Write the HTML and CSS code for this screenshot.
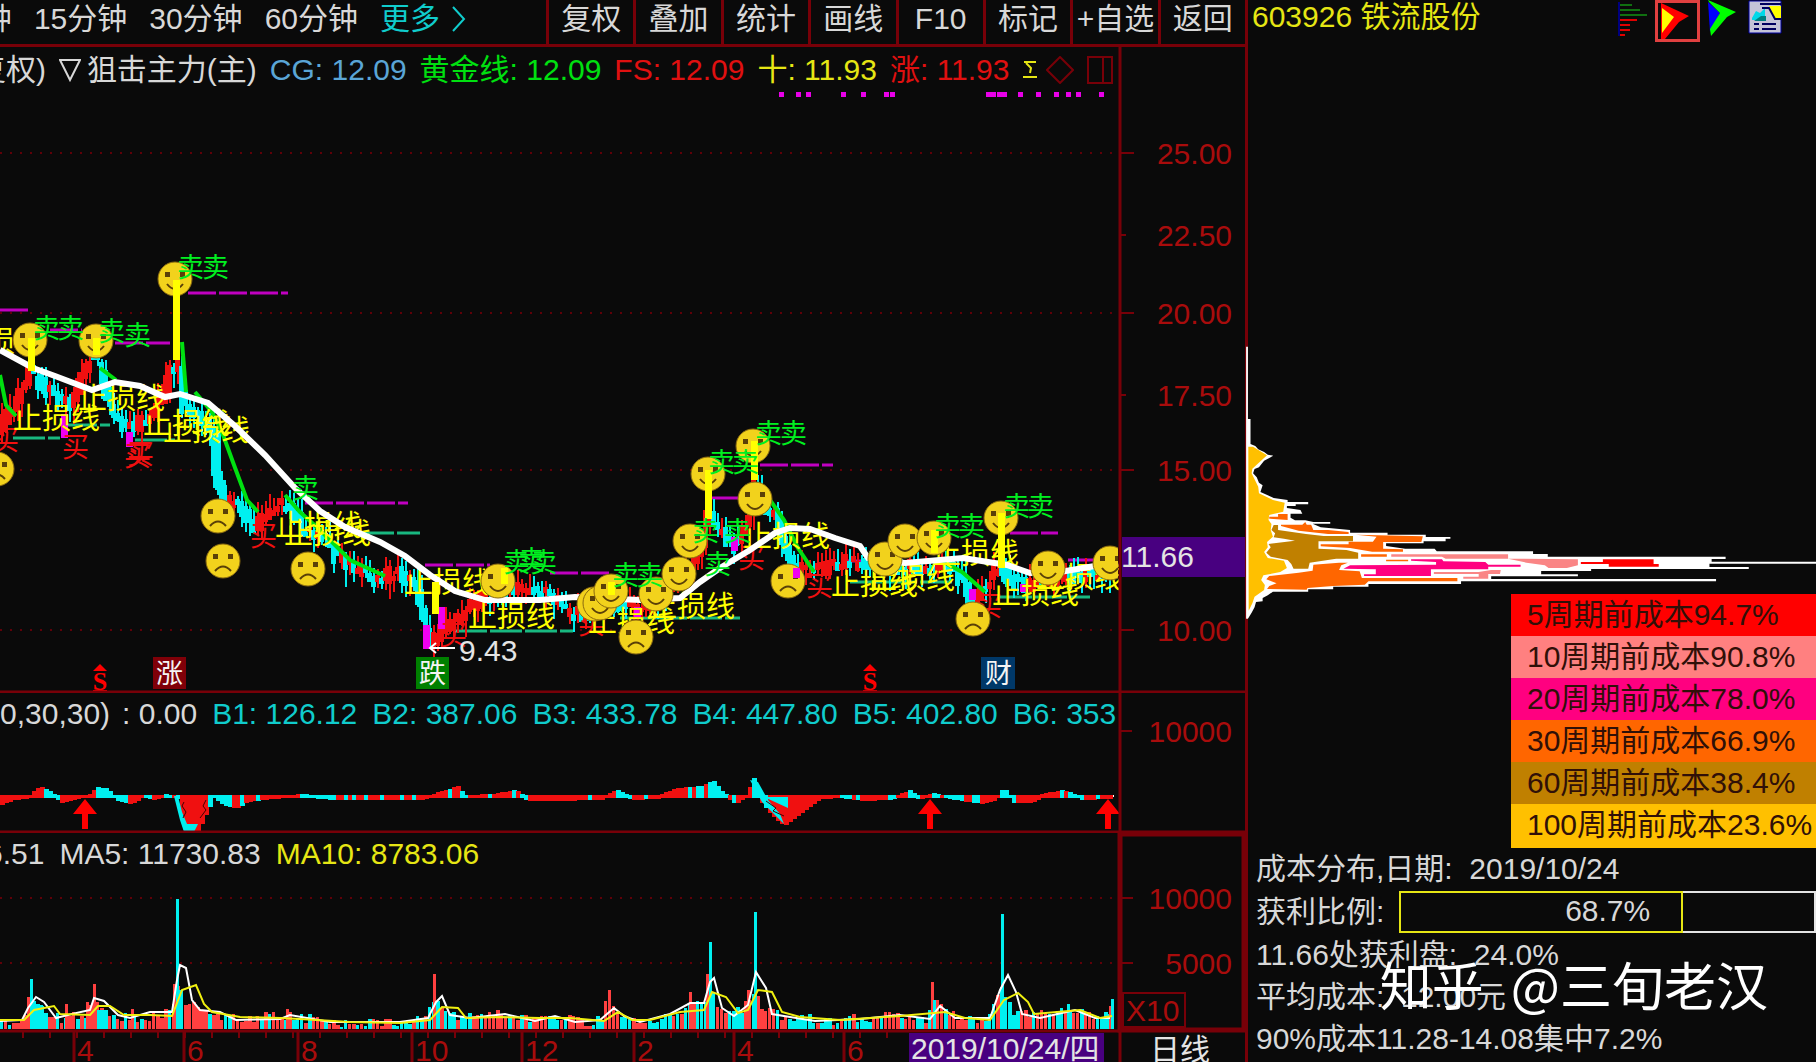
FILE: index.html
```html
<!DOCTYPE html>
<html lang="zh-CN">

<head>
    <meta charset="utf-8">
    <meta name="viewport" content="width=device-width, initial-scale=1">
    <title>铁流股份 603926</title>
    <link rel="stylesheet" href="styles.css">
</head>

<body>
    <div class="app">
        <main class="main">
            <div class="toolbar">
                <nav class="periods">
                    <a href="#">5分钟</a>
                    <a href="#">15分钟</a>
                    <a href="#">30分钟</a>
                    <a href="#">60分钟</a>
                    <a href="#" class="more">更多
                        <svg width="14" height="26" viewBox="0 0 14 26"><path d="M1 1L12 13L1 25" /></svg>
                    </a>
                </nav>
                <div class="tools">
                    <button type="button">复权</button>
                    <button type="button">叠加</button>
                    <button type="button">统计</button>
                    <button type="button">画线</button>
                    <button type="button">F10</button>
                    <button type="button">标记</button>
                    <button type="button">+自选</button>
                    <button type="button">返回</button>
                </div>
            </div>

            <section class="pane">
                <svg id="price" class="chart" viewBox="0 47 1245 646"></svg>
                <div class="info info-end">
                    <span>(前复权)</span>
                    <span class="name"><svg width="22" height="24" viewBox="0 0 22 24"><path d="M1 2H21L11 22Z" /></svg>狙击主力(主)</span>
                    <span class="blue">CG: 12.09</span>
                    <span class="green">黄金线: 12.09</span>
                    <span class="red">FS: 12.09</span>
                    <span class="yellow">十: 11.93</span>
                    <span class="red">涨: 11.93</span>
                    <svg class="sigma" width="14" height="20" viewBox="0 0 14 20"><path d="M1 2H13M3 3L8 8L7 13M0 17H14" /></svg>
                    <svg class="dim" width="28" height="28" viewBox="0 0 28 28"><path d="M14 1L27 14L14 27L1 14Z" /></svg>
                    <svg class="dim" width="26" height="28" viewBox="0 0 26 28"><path d="M1 1H25V27H1ZM16 1V27" /></svg>
                </div>
            </section>

            <section class="pane">
                <svg id="wave" class="chart" viewBox="0 693 1245 140"></svg>
                <div class="info info-wave">
                    <span>0,30,30)</span>
                    <span>: 0.00</span>
                    <span class="cyan">B1: 126.12</span>
                    <span class="cyan">B2: 387.06</span>
                    <span class="cyan">B3: 433.78</span>
                    <span class="cyan">B4: 447.80</span>
                    <span class="cyan">B5: 402.80</span>
                    <span class="cyan">B6: 353</span>
                </div>
            </section>

            <section class="pane">
                <svg id="volume" class="chart" viewBox="0 833 1245 229"></svg>
                <div class="info info-volume">
                    <span>6.51</span>
                    <span>MA5: 11730.83</span>
                    <span class="yellow">MA10: 8783.06</span>
                </div>
            </section>
        </main>

        <aside class="side">
            <header class="side-head">
                <h1>603926 铁流股份</h1>
                <div class="side-icons">
                    <button type="button" aria-label="分价">
                        <svg width="30" height="38" viewBox="0 0 30 38" fill="none" stroke-width="2">
                            <path stroke="#107010" d="M2 5H14M2 10H22M2 15H29" />
                            <path stroke="#e00000" d="M2 20H19M2 25H12M2 30H12M2 35H7" />
                            <path stroke="#000080" d="M1 2V36" />
                        </svg>
                    </button>
                    <button type="button" class="on" aria-label="筹码">
                        <svg width="28" height="36" viewBox="0 0 28 36">
                            <path fill="#f00" d="M0 0L28 13L18 19L4 36L0 36Z" />
                            <path fill="#ff0" d="M1 5L13 14L1 30Z" />
                        </svg>
                    </button>
                    <button type="button" aria-label="火焰山">
                        <svg width="30" height="36" viewBox="0 0 30 36">
                            <path fill="#00f" d="M1 2L13 13L3 32Z" />
                            <path fill="#0f0" d="M1 0L29 12L20 17L4 36L3 29L13 13L2 2Z" />
                        </svg>
                    </button>
                    <button type="button" aria-label="资料">
                        <svg width="34" height="34" viewBox="0 0 34 34">
                            <path fill="#c4c4d8" stroke="#0000a0" d="M1 1H33V33H1Z" />
                            <path fill="#00d8e8" d="M4 18L8 11L12 13L17 8V20H4Z" />
                            <path fill="#008080" d="M13 16H18V21H6Z" />
                            <path fill="#ff0" d="M21 6H33V18H27L22 12Z" />
                            <path fill="none" stroke="#000060" stroke-width="2" d="M12 4H33M14 8H21L27 19H33M6 24H11M14 24H28M6 29H11M14 29H28" />
                        </svg>
                    </button>
                </div>
            </header>

            <svg class="dist" viewBox="14 0 1554 762" preserveAspectRatio="none">
                <path fill="#fff" d="M17 20H22V237H29V312L42 318L50 328L66 336L76 344L91 347L80 354L66 362L52 382L40 387L36 400L46 412L52 428L62 436L56 456L76 466L92 474L130 480V486H186V493H152V498H128V504L165 510L170 521H138V533L150 541H178L200 546H246V551H198L220 562L300 570V578H402V584H506V591H573V596H560V604H500V610H398V618L450 626H530L536 634H798V642H838V650H1322V657H1284V665H1568V671H1278V681H1385V687H956V693H820V703H920V709H684V717H1296V724H602V732H350V740H254V748H186V755H90L76 766L62 774V784L44 786L40 802L32 818L22 836H17Z" />
                <path fill="#ffc000" d="M23 320H36L74 346L34 386L32 400L50 440L52 460L90 480L122 488L118 515L80 525L78 540L86 552L84 570L90 590L74 606L76 622L66 636L76 654L120 662L128 684L110 696L64 706L58 720L68 735L66 750L40 770L34 790L24 812Z" />
                <path fill="#c08000" d="M92 555H104V570L180 582L228 588H308V604H214V626L290 630L322 638V656H262L190 668L186 686H146L140 672L130 660L84 650L72 638L84 622L78 612L150 602L120 596L92 592L96 580L86 570Z" />
                <path fill="#ff6600" d="M104 522H130V540L80 536V530H104ZM112 554H170L178 546L182 554H194L200 570H240L296 576V582H240L160 572L112 558ZM316 584L498 589L494 606H390V626L444 628V635H360L300 624L220 619V613H296V605H362L372 590ZM330 643H400V650H330ZM398 659H458V664H398ZM200 674L270 668H294L276 676L270 690L326 694L332 714H592V724H350L340 734L254 738L184 744L182 749L74 747L80 738L100 730L72 718L80 708L160 698L198 692Z" />
                <path fill="#fa8585" d="M412 643H730V656H770L920 658V676L890 684H840L830 676L780 668L730 656H560L550 650H412ZM528 696H650L684 690H710L708 702H676V716H608V710H650V702H528Z" />
                <path fill="#ff0080" d="M466 658H550L554 664L668 666L676 674H764V680H676V688H520V708H338V703H370V688L282 686L300 676L534 674V666L466 662Z" />
                <path fill="#f00" d="M988 658H1126V672H1140V680H1004V672H928V666H988Z" />
            </svg>

            <ul class="legend">
                <li class="c5">5周期前成本94.7%</li>
                <li class="c10">10周期前成本90.8%</li>
                <li class="c20">20周期前成本78.0%</li>
                <li class="c30">30周期前成本66.9%</li>
                <li class="c60">60周期前成本38.4%</li>
                <li class="c100">100周期前成本23.6%</li>
            </ul>

            <div class="stats">
                <p>成本分布,日期: &nbsp;2019/10/24</p>
                <div class="ratio">
                    <span>获利比例:</span>
                    <div class="ratio-bar">
                        <div class="ratio-fill" style="width: 68.7%"></div>
                        <span class="ratio-text">68.7%</span>
                    </div>
                </div>
                <p>11.66处获利盘: &nbsp;24.0%</p>
                <p>平均成本: &nbsp;12.00元</p>
                <p>90%成本11.28-14.08集中7.2%</p>
            </div>

            <div class="watermark"><span>知乎</span><span>@三旬老汉</span></div>
        </aside>
    </div>
    <script src="chart.js"></script>
</body>

</html>
```

FILE: styles.css
```css
* {
    box-sizing: border-box;
}

body {
    margin: 0;
    background-color: #0a0a0a;
    color: #d8d8d8;
    font-family: "Liberation Sans", "Noto Sans CJK SC", sans-serif;
    font-size: 30px;
    line-height: 42px;
    overflow: hidden;
}

a {
    color: inherit;
    text-decoration: none;
}

button {
    padding: 0;
    border: none;
    background: none;
    color: inherit;
    font: inherit;
    cursor: pointer;
}

.app {
    display: grid;
    grid-template-columns: minmax(0, 1245fr) minmax(0, 571fr);
    min-height: 100vh;
}

/* toolbar */
.toolbar {
    display: grid;
    grid-template-columns: minmax(0, 546fr) minmax(0, 699fr);
    height: 47px;
    border-bottom: 3px solid #780008;
    line-height: 38px;
    white-space: nowrap;
}

.periods {
    display: flex;
    justify-content: flex-end;
    gap: 22px;
    padding-right: 80px;
    overflow: hidden;
}

.more {
    display: flex;
    align-items: center;
    gap: 12px;
    height: 38px;
    color: #10cccc;
}

.more svg {
    fill: none;
    stroke: #10cccc;
    stroke-width: 2;
}

.tools {
    display: grid;
    grid-template-columns: repeat(8, minmax(0, 1fr));
}

.tools button {
    padding-bottom: 6px;
    border-left: 3px solid #780008;
}

/* chart panes */
.pane {
    position: relative;
}

.chart {
    display: block;
    width: 100%;
}

.info {
    position: absolute;
    top: 0;
    left: 0;
    width: 90%;
    display: flex;
    gap: 15px;
    overflow: hidden;
    white-space: nowrap;
}

.info-end {
    align-items: center;
    justify-content: flex-end;
    gap: 13px;
    padding: 2px 8px 0 0;
}

.info-wave span:nth-child(2) {
    margin-left: -3px;
}

.info-volume span:first-child {
    margin-left: -14px;
}

.info span,
.info svg {
    flex: none;
}

.info svg {
    fill: none;
    stroke: #d8d8d8;
    stroke-width: 2;
}

.name {
    display: flex;
    align-items: center;
    gap: 6px;
}

.info .sigma {
    margin-right: -4px;
    stroke: #e6e614;
}

.info .dim {
    stroke: #780008;
}

.blue {
    color: #5aa5d6;
}

.green {
    color: #00e010;
}

.red {
    color: #e01010;
}

.yellow {
    color: #e6e614;
}

.cyan {
    color: #10cccc;
}

.chart .frame {
    fill: none;
    stroke: #780008;
    stroke-width: 3;
}

.chart .heavy {
    stroke-width: 5;
}

.chart .thin {
    stroke-width: 2;
}

.chart .grid {
    stroke: #600008;
    stroke-width: 2;
    stroke-dasharray: 2 8;
}

.chart .axis {
    fill: #a80c0c;
}

.chart .end {
    text-anchor: end;
}

.chart .mid {
    text-anchor: middle;
}

.chart .cursor {
    fill: #480080;
}

.chart .light {
    fill: #e4e4e4;
}

.chart .sell {
    fill: #00f020;
    font-size: 27px;
}

.chart .buy {
    fill: #f01010;
    font-size: 27px;
}

.chart .stop {
    fill: #ffff00;
    font-size: 29px;
}

.chart .badge {
    fill: #f4f4f4;
    font-size: 27px;
}

.chart .mark {
    fill: #ff0000;
    font-family: "Liberation Serif", serif;
    font-size: 26px;
    font-weight: bold;
}

/* right panel */
.side {
    position: relative;
    display: flex;
    flex-direction: column;
    border-left: 3px solid #780008;
}

.side-head {
    display: flex;
    align-items: flex-start;
    justify-content: space-between;
    height: 340px;
    padding: 0 34px 0 4px;
    color: #e6e614;
}

.side-head h1 {
    margin: 0;
    font-size: 30px;
    font-weight: normal;
    line-height: 34px;
}

.side-icons {
    display: flex;
    align-items: flex-start;
    gap: 7px;
}

.side-icons svg {
    display: block;
}

.side-icons button:last-child {
    margin-left: 4px;
}

.side-icons .on {
    padding: 0 8px 0 3px;
    border: 3px solid #e04040;
}

.dist {
    display: block;
    width: calc(100% + 3px);
    height: 254px;
    margin-left: -3px;
    overflow: visible;
    flex: none;
}

.legend {
    align-self: flex-end;
    width: 305px;
    margin: 0;
    padding: 0;
    list-style: none;
    color: #301008;
    white-space: nowrap;
}

.legend li {
    height: 42px;
    padding-left: 16px;
}

.legend .c5 {
    background-color: #ff0000;
}

.legend .c10 {
    background-color: #ff8080;
}

.legend .c20 {
    background-color: #ff0080;
}

.legend .c30 {
    background-color: #ff6600;
}

.legend .c60 {
    background-color: #c08000;
}

.legend .c100 {
    height: 44px;
    background-color: #ffc000;
}

.stats {
    padding-left: 8px;
    white-space: nowrap;
}

.stats p {
    height: 42px;
    margin: 0;
}

.ratio {
    display: flex;
    align-items: center;
    gap: 15px;
    height: 44px;
}

.ratio-bar {
    position: relative;
    flex: 1;
    height: 42px;
    border: 2px solid #e4e4e4;
    line-height: 36px;
    text-align: center;
}

.ratio-fill {
    position: absolute;
    top: -2px;
    left: -2px;
    height: 42px;
    border: 2px solid #e6e614;
}

.watermark {
    position: absolute;
    right: 48px;
    bottom: 40px;
    display: flex;
    gap: 27px;
    color: #ffffff;
    font-family: "Noto Sans CJK SC", sans-serif;
    font-size: 52px;
    line-height: 76px;
    white-space: nowrap;
}
```

FILE: chart.js
```js
var RED = "#f01010";
var CYAN = "#00f0f0";

// fixed seed so that the bars are the same on every load
var seed = 603926;
function rnd() {
    seed = (seed * 16807) % 2147483647;
    return seed / 2147483647;
}

function line(x1, y1, x2, y2, cls) {
    return '<path class="' + cls + '" d="M' + x1 + ' ' + y1 + 'L' + x2 + ' ' + y2 + '"/>';
}

function stroke(points, color, width, dash) {
    return '<polyline fill="none" stroke="' + color + '" stroke-width="' + width + '"' +
        (dash ? ' stroke-dasharray="' + dash + '"' : '') + ' points="' + points + '"/>';
}

function rect(x, y, w, h, color) {
    return '<rect x="' + x + '" y="' + y + '" width="' + w + '" height="' + h + '" fill="' + color + '"/>';
}

function text(x, y, cls, str) {
    return '<text x="' + x + '" y="' + y + '" class="' + cls + '">' + str + '</text>';
}

// value of a list of [x, y] points at x
function at(points, x) {
    for (var i = 1; i < points.length; i++) {
        if (x <= points[i][0]) {
            var a = points[i - 1], b = points[i];
            return a[1] + (b[1] - a[1]) * (x - a[0]) / (b[0] - a[0]);
        }
    }
    return points[points.length - 1][1];
}

function face(x, y, sad) {
    var mouth = sad ? 'M-8 10Q0 1 8 10' : 'M-8 5Q0 15 8 5';
    return '<g transform="translate(' + x + ' ' + y + ')">' +
        '<circle r="17" fill="#f2d21c" stroke="#8a6a10" stroke-width="1"/>' +
        '<path fill="#5a4008" d="M-10 -7h5v5h-5zM5 -7h5v5h-5z"/>' +
        '<path fill="none" stroke="#5a4008" stroke-width="2" d="' + mouth + '"/></g>';
}

function drawPrice() {
    var s = '';
    [153, 313, 470, 630].forEach(function (y) {
        s += line(0, y, 1118, y, 'grid');
    });

    var dots = [781, 798, 808, 843, 863, 886, 892, 988, 993, 999, 1004, 1020, 1038, 1056, 1068, 1078, 1101];
    dots.forEach(function (x) {
        s += rect(x - 2, 92, 5, 5, '#e800e8');
    });

    // resistance and support segments
    [[0, 28, 310], [50, 82, 330], [115, 170, 343], [188, 288, 293], [305, 408, 503], [425, 490, 565],
    [550, 612, 573], [712, 742, 498], [760, 833, 465], [845, 872, 561], [1010, 1058, 533], [1068, 1096, 560]].forEach(function (l) {
        s += stroke(l[0] + ',' + l[2] + ' ' + l[1] + ',' + l[2], '#c000c0', 3, '28 3');
    });
    [[13, 60, 438], [65, 110, 425], [135, 175, 440], [362, 420, 533], [455, 573, 631], [620, 740, 618], [850, 960, 582], [1000, 1090, 597]].forEach(function (l) {
        s += stroke(l[0] + ',' + l[2] + ' ' + l[1] + ',' + l[2], '#18b880', 3, '32 3');
    });

    var price = [[0, 425], [15, 405], [30, 368], [45, 385], [60, 395], [75, 400], [90, 355], [100, 360], [108, 400], [120, 420],
    [135, 425], [150, 415], [165, 395], [172, 362], [180, 365], [184, 405], [200, 412], [212, 425], [217, 480], [224, 505],
    [235, 500], [247, 512], [254, 530], [268, 510], [290, 500], [305, 530], [322, 532], [335, 552], [360, 570], [380, 578], [400, 568],
    [416, 585], [423, 610], [428, 640], [440, 632], [455, 618], [475, 602], [495, 590], [520, 588], [545, 588],
    [570, 610], [585, 612], [610, 602], [640, 605], [660, 598], [680, 580], [700, 550], [708, 510], [718, 528], [735, 545],
    [748, 520], [754, 480], [765, 505], [775, 512], [785, 545], [795, 570], [820, 568], [850, 560], [870, 565], [910, 565], [950, 566],
    [965, 580], [973, 602], [985, 585], [1000, 565], [1010, 575], [1030, 582], [1060, 575], [1118, 568]];
    for (var x = 1; x < 1116; x += 4) {
        var y0 = at(price, x - 3) + rnd() * 10 - 5;
        var y1 = at(price, x + 3) + rnd() * 14 - 7;
        var color = y1 > y0 ? CYAN : RED;
        var top = Math.round(Math.min(y0, y1)), h = Math.round(Math.abs(y1 - y0)) + 5;
        s += rect(x - 2, top, 5, h, color);
        s += rect(x, Math.round(top - 3 - rnd() * 11), 2, Math.round(h + 8 + rnd() * 14), color);
    }
    s += rect(213, 430, 8, 58, CYAN) + rect(219, 480, 7, 20, CYAN);
    [[61, 414, 24], [126, 432, 15], [423, 625, 24], [438, 607, 22], [731, 537, 14], [634, 607, 10], [969, 589, 11], [1020, 584, 8]].forEach(function (b) {
        s += rect(b[0], b[1], 7, b[2], '#f000f0');
    });

    ['0,375 6,405 16,416', '100,368 116,380', '182,342 186,392', '195,392 212,412 222,432 234,465 247,500 258,512',
        '285,495 300,512 320,530 350,560 385,576', '770,500 784,520 798,548 814,572', '940,560 962,572 985,592'].forEach(function (p) {
        s += stroke(p, '#00e010', 4);
    });

    [[-8, 450], [62, 457], [124, 466], [127, 464], [250, 546], [578, 634], [738, 568], [806, 596], [975, 616], [440, 645]].forEach(function (p) {
        s += text(p[0], p[1], 'buy', '买');
    });
    [[13, 429], [78, 409], [143, 434], [163, 441], [275, 536], [284, 544], [404, 593], [468, 627], [588, 632],
    [648, 617], [743, 547], [831, 595], [868, 589], [932, 564], [992, 604], [1036, 588]].forEach(function (p) {
        s += text(p[0], p[1], 'stop', '止损线');
    });
    s += text(-14, 352, 'stop', '损');

    s += stroke('0,350 33,368 55,376 92,390 115,382 140,386 165,397 180,394 208,403 235,426 265,455 295,488 320,511 345,527 380,542 ' +
        '405,556 430,575 455,591 485,600 540,600 575,597 640,600 680,598 700,582 720,568 750,550 775,533 790,528 810,529 835,538 860,546 868,558 905,563 ' +
        '963,558 1007,565 1030,573 1060,572 1118,562', '#fff', 6);

    var faces = [[-3, 469, 1], [30, 340, 0], [96, 341, 0], [175, 279, 0], [218, 516, 1], [223, 561, 1], [308, 569, 1],
    [498, 581, 0], [594, 604, 0], [600, 603, 0], [611, 591, 0], [656, 594, 0], [679, 574, 0], [690, 541, 0], [708, 474, 0],
    [753, 446, 0], [755, 499, 0], [788, 581, 1], [885, 559, 0], [905, 541, 0], [934, 538, 0], [1001, 518, 0], [1048, 568, 0],
    [636, 637, 1], [973, 619, 1]];
    faces.forEach(function (f) {
        s += face(f[0], f[1], f[2]);
    });
    // the last one is cut by the axis
    s += '<svg x="1080" y="540" width="38" height="50">' + face(30, 23, 0) + '</svg>';

    [[28, 338, 33], [93, 338, 17], [173, 280, 80], [501, 568, 16], [608, 582, 13], [705, 470, 49], [751, 441, 39], [931, 530, 23], [998, 513, 55], [432, 582, 32]].forEach(function (b) {
        s += rect(b[0], b[1], 7, b[2], '#ffff00');
    });
    s += rect(793, 568, 7, 10, '#f000f0');

    [[33, 338], [57, 338], [98, 341], [124, 345], [177, 277], [202, 277], [292, 498], [503, 572], [518, 570], [530, 572],
    [612, 585], [636, 585], [708, 472], [732, 472], [692, 541], [724, 541], [704, 574], [755, 443], [780, 443],
    [934, 536], [958, 536], [1003, 516], [1027, 516]].forEach(function (p) {
        s += text(p[0], p[1], 'sell', '卖');
    });

    s += stroke('430,648 455,648', '#fff', 2) + stroke('436,643 430,648 436,653', '#fff', 2);
    s += text(459, 661, 'light', '9.43');

    s += rect(153, 657, 33, 32, '#800008') + text(156, 683, 'badge', '涨');
    s += rect(416, 657, 33, 32, '#008000') + text(419, 683, 'badge', '跌');
    s += rect(981, 657, 34, 32, '#003868') + text(985, 683, 'badge', '财');
    [100, 870].forEach(function (x) {
        s += '<path fill="#f00" d="M' + x + ' 664l7 7h-14z"/>' + text(x, 690, 'mark mid', 'S') + rect(x - 7, 690, 14, 2, '#f00');
    });

    // axis
    s += rect(1121, 500, 124, 110, '#0a0a0a');
    s += line(1120, 47, 1120, 693, 'frame');
    [[25, 153], [22.5, 235], [20, 313], [17.5, 395], [15, 470], [10, 630]].forEach(function (t) {
        s += line(1120, t[1], t[0] % 5 ? 1126 : 1134, t[1], 'frame thin');
        s += text(1232, t[1] + 11, 'axis end', t[0].toFixed(2));
    });
    s += '<rect class="cursor" x="1122" y="537" width="123" height="40"/>';
    s += text(1121, 567, 'light', '11.66');
    s += line(0, 692, 1245, 692, 'frame');
    document.getElementById("price").innerHTML = s;
}

function drawWave() {
    var s = stroke('0,796 1114,796', '#fff', 2);
    var wave = [[0, 802], [12, 797], [28, 795], [38, 786], [50, 792], [60, 800], [75, 796], [88, 794], [95, 787], [105, 788], [115, 798],
    [130, 801], [142, 794], [152, 797], [165, 794], [176, 796], [182, 820], [188, 831], [196, 830], [204, 812], [212, 795],
    [222, 802], [234, 806], [246, 799], [270, 796], [300, 794], [330, 797], [420, 797], [434, 793], [456, 786], [464, 795], [490, 794],
    [515, 790], [525, 798], [545, 798], [600, 797], [615, 790], [630, 797], [655, 796], [675, 788], [700, 786], [711, 780], [722, 793],
    [734, 801], [744, 795], [752, 778], [760, 800], [770, 812], [782, 823], [794, 814], [806, 805], [818, 796], [840, 795], [860, 798],
    [890, 797], [908, 790], [918, 797], [930, 793], [960, 798], [980, 801], [994, 797], [1002, 787], [1012, 800], [1030, 800], [1042, 793],
    [1062, 790], [1080, 797], [1110, 796]];
    for (var x = 0; x < 1112; x += 4) {
        var y = Math.round(at(wave, x));
        var up = at(wave, x + 5) <= at(wave, x - 1);
        var color = rnd() < 0.12 ? !up : up;
        if (y > 806) color = true;
        s += rect(x, Math.min(y, 795), 5, Math.abs(y - 795) + 3, color ? RED : CYAN);
    }
    s += '<path fill="#00f0f0" d="M174 796L180 820L184 832H194L198 824H187L182 812L178 796ZM750 780L762 802L784 824L780 814L768 800L758 782ZM764 797H788V808Z"/>';
    s += stroke('184,802 182,806 186,812 183,818', '#400', 1) + stroke('206,800 203,806 206,810 200,818', '#400', 1);
    s += stroke('766,801 776,808 773,811 784,816', '#400', 1);
    [85, 930, 1108].forEach(function (x) {
        s += '<path fill="#f00" d="M' + x + ' 799l12 15h-9v15h-6v-15h-9z"/>';
    });
    s += line(1120, 693, 1120, 833, 'frame');
    s += line(1120, 731, 1132, 731, 'frame thin') + text(1232, 742, 'axis end', '10000');
    s += line(0, 832, 1245, 832, 'frame');
    document.getElementById("wave").innerHTML = s;
}

function drawVolume() {
    var s = line(0, 898, 1118, 898, 'grid') + line(0, 963, 1118, 963, 'grid');
    var level = [[0, 1020], [24, 1018], [30, 998], [44, 1010], [60, 1018], [86, 1012], [94, 1000], [112, 1014], [140, 1018], [170, 1010],
    [176, 985], [184, 1000], [205, 1012], [240, 1018], [285, 1014], [340, 1023], [410, 1020], [428, 1008], [436, 1000], [450, 1014],
    [500, 1014], [530, 1020], [555, 1014], [590, 1022], [612, 1008], [625, 1020], [650, 1018], [680, 1010], [704, 1000], [710, 992],
    [724, 1016], [740, 1008], [752, 990], [764, 1010], [780, 1014], [820, 1020], [900, 1014], [925, 1018], [936, 1002], [960, 1018],
    [985, 1020], [1000, 990], [1012, 1010], [1030, 1014], [1070, 1010], [1100, 1018], [1112, 1012]];
    for (var x = 0; x < 1110; x += 4) {
        var top = Math.round(at(level, x) + rnd() * 10 - 4);
        s += rect(x, top, rnd() < 0.5 ? 4 : 3, 1029 - top, rnd() < 0.52 ? '#ff4040' : CYAN);
    }
    [[31, 979, 0], [28, 997, 1], [66, 1004, 1], [87, 1002, 1], [94, 984, 1], [132, 1009, 1], [174, 984, 1], [177, 899, 0], [287, 1009, 1], [434, 974, 1],
    [605, 1001, 1], [609, 990, 1], [690, 992, 1], [707, 974, 1], [710, 942, 0], [748, 990, 1], [755, 912, 0], [932, 982, 1], [934, 1000, 0],
    [1002, 914, 0], [1068, 1004, 0], [1110, 1006, 1], [1112, 999, 0]].forEach(function (b) {
        s += rect(b[0] - 1, b[1], 3, 1029 - b[1], b[2] ? '#ff4040' : CYAN);
    });
    s += rect(31, 1006, 13, 23, CYAN) + rect(97, 1010, 11, 19, CYAN) + rect(177, 990, 6, 39, CYAN);

    s += stroke('0,1021 22,1020 28,1008 36,997 44,1002 56,1018 72,1014 90,1010 94,998 104,1001 118,1015 130,1018 150,1012 172,1012 177,980 180,965 186,968 192,1000 200,1010 220,1012 236,1020 280,1019 290,1015 330,1022 400,1022 428,1018 436,1002 442,996 450,1015 470,1018 505,1014 535,1021 555,1016 575,1022 600,1020 614,1008 624,1016 640,1022 670,1014 690,1003 704,1003 710,982 714,978 722,1008 734,1016 748,1005 756,972 766,988 772,1014 790,1017 815,1021 860,1019 900,1015 930,1019 940,1006 955,1018 990,1018 1000,990 1008,975 1016,992 1022,1014 1040,1018 1075,1010 1095,1018 1110,1018', '#fff', 2);
    s += stroke('0,1020 24,1020 34,1010 54,1006 60,1014 90,1015 98,1006 110,1006 124,1015 150,1015 172,1016 182,990 196,985 204,1004 212,1012 240,1017 280,1018 300,1019 350,1022 400,1023 430,1020 442,1007 458,1008 466,1018 500,1017 540,1018 570,1018 604,1021 618,1012 632,1020 650,1020 680,1012 704,1010 712,992 726,997 738,1013 748,1010 758,990 772,992 782,1012 800,1017 840,1020 900,1016 945,1012 965,1018 990,1020 1004,1000 1018,993 1028,1002 1034,1014 1080,1010 1100,1018 1112,1016', '#f0f010', 2);

    // frame and value axis
    s += line(0, 1031, 1120, 1031, 'frame');
    s += '<rect class="frame heavy" x="1120" y="834" width="124" height="196"/>';
    [['10000', 898], ['5000', 963]].forEach(function (t) {
        s += line(1120, t[1], 1133, t[1], 'frame thin') + text(1232, t[1] + 11, 'axis end', t[0]);
    });
    s += '<rect class="frame thin" x="1123" y="993" width="62" height="34"/>' + text(1126, 1021, 'axis', 'X10');

    // months
    for (var t = 23; t < 900; t += 27) {
        s += line(t, 1032, t, 1038, 'frame thin');
    }
    [[74, '4'], [184, '6'], [298, '8'], [412, '10'], [522, '12'], [634, '2'], [734, '4'], [844, '6']].forEach(function (m) {
        s += line(m[0], 1031, m[0], 1062, 'frame') + text(m[0] + 3, 1061, 'axis', m[1]);
    });
    s += '<rect class="cursor" x="909" y="1033" width="195" height="29"/>';
    s += text(911, 1059, 'light', '2019/10/24/四');
    s += line(1120, 1031, 1120, 1062, 'frame') + text(1180, 1060, 'light mid', '日线');
    document.getElementById("volume").innerHTML = s;
}

drawPrice();
drawWave();
drawVolume();
```
